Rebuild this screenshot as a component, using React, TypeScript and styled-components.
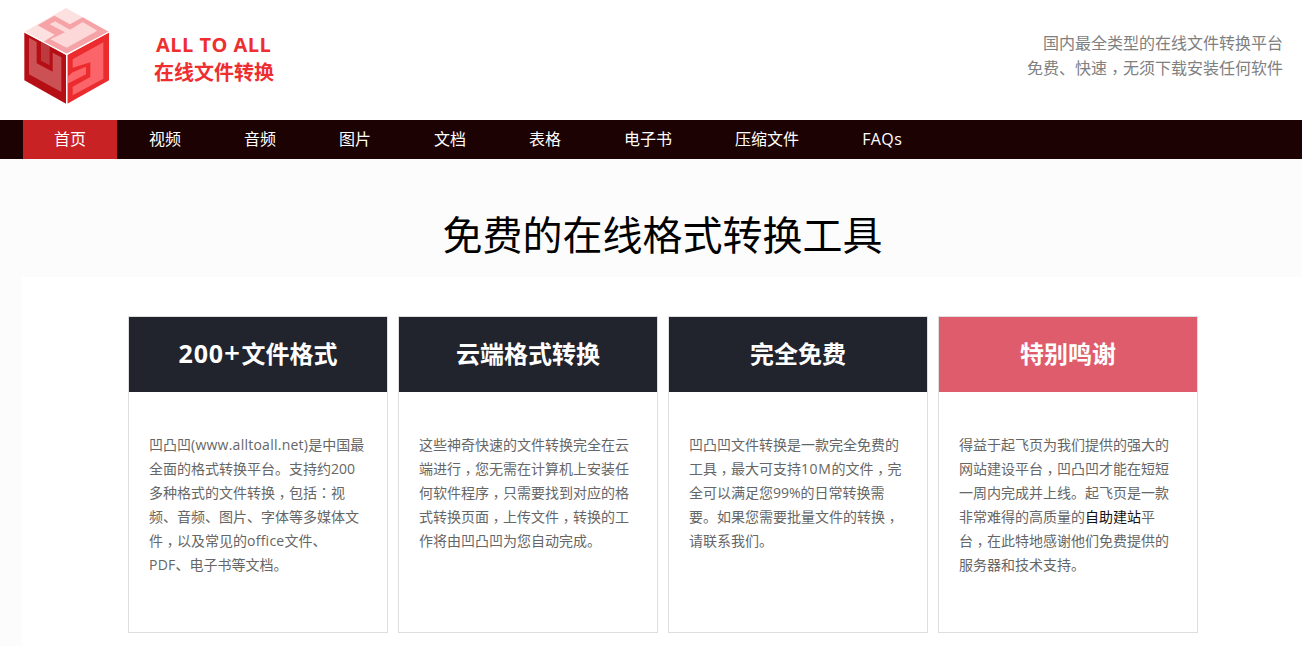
import React from 'react';
import styled, { createGlobalStyle } from 'styled-components';

const GlobalStyle = createGlobalStyle`
  body {
    margin: 0;
    background: #fcfcfc;
    font-family: 'Open Sans', 'Noto Sans CJK SC', sans-serif;
    text-spacing-trim: space-all;
    overflow: hidden;
  }
`;

const Header = styled.header`
  display: flex;
  align-items: center;
  height: 120px;
  padding: 0 19px 0 10px;
  background: #fff;
`;

const Logo = styled.svg`
  display: block;
  width: 120px;
  height: 120px;
`;

const Brand = styled.div`
  margin-left: 24px;
  padding-bottom: 2px;
  color: #ee2f2f;
  font-size: 20px;
  line-height: 28px;
  font-weight: 700;
`;

const BrandLatin = styled.div`
  padding-left: 2px;
  letter-spacing: 0.45px;
`;

const Slogan = styled.p`
  margin: 0 0 8px auto;
  color: #808080;
  font-size: 16px;
  line-height: 25px;
  text-align: right;
`;

const Nav = styled.nav`
  display: flex;
  gap: 1px;
  height: 39px;
  padding-left: 23px;
  background: #1c0202;
`;

const NavItem = styled.a<{ $active?: boolean }>`
  padding: 0 31px;
  background: ${(p) => (p.$active ? '#c92224' : 'transparent')};
  color: #fff;
  font-size: 16px;
  line-height: 38px;
  white-space: nowrap;
`;

const Title = styled.h1`
  margin: 0;
  padding: 41px 0 0 23px;
  height: 77px;
  color: #000;
  font-size: 40px;
  line-height: 70px;
  font-weight: 400;
  text-align: center;
`;

const Content = styled.main`
  display: flex;
  gap: 10px;
  height: 330px;
  margin-left: 22px;
  padding: 39px 0 0 106px;
  background: #fff;
`;

const Card = styled.section`
  box-sizing: border-box;
  width: 260px;
  height: 317px;
  border: 1px solid #dedede;
`;

const CardTitle = styled.h2<{ $accent?: boolean }>`
  margin: 0;
  height: 75px;
  background: ${(p) => (p.$accent ? '#df5c6c' : '#21242d')};
  color: #fff;
  font-size: 24px;
  line-height: 74px;
  font-weight: 700;
  text-align: center;
`;

const CardText = styled.p`
  margin: 0;
  padding: 41px 0 0 20px;
  color: #666;
  font-size: 14px;
  line-height: 24px;
`;

const Line = styled.span`
  display: block;
  height: 24px;
  white-space: nowrap;
`;

const Centered = styled.span<{ $low?: boolean }>`
  font-family: 'Noto Sans CJK TC', sans-serif;
  line-height: 0;
  vertical-align: ${(p) => (p.$low ? '-0.25em' : 'baseline')};
`;

const Latin = styled.span<{ $spacing: number }>`
  letter-spacing: ${(p) => p.$spacing}px;
`;

const Figure = styled.span`
  font-size: 25px;
  line-height: 0;
  letter-spacing: 0.9px;
`;

const Plus = styled.span`
  font-size: 28px;
  line-height: 0;
  font-weight: 600;
  letter-spacing: 1.4px;
`;

const Link = styled.a`
  color: #111;
`;

const navItems = ['首页', '视频', '音频', '图片', '文档', '表格', '电子书', '压缩文件', 'FAQs'];

const LINK_TEXT = '自助建站';

const cards = [
  {
    title: (
      <>
        <Figure>200</Figure>
        <Plus>+</Plus>
        文件格式
      </>
    ),
    lines: [
      '凹凸凹(www.alltoall.net)是中国最',
      '全面的格式转换平台。支持约200',
      '多种格式的文件转换，包括：视',
      '频、音频、图片、字体等多媒体文',
      '件，以及常见的office文件、',
      'PDF、电子书等文档。',
    ],
  },
  {
    title: '云端格式转换',
    lines: [
      '这些神奇快速的文件转换完全在云',
      '端进行，您无需在计算机上安装任',
      '何软件程序，只需要找到对应的格',
      '式转换页面，上传文件，转换的工',
      '作将由凹凸凹为您自动完成。',
    ],
  },
  {
    title: '完全免费',
    lines: [
      '凹凸凹文件转换是一款完全免费的',
      '工具，最大可支持10M的文件，完',
      '全可以满足您99%的日常转换需',
      '要。如果您需要批量文件的转换，',
      '请联系我们。',
    ],
  },
  {
    title: '特别鸣谢',
    accent: true,
    lines: [
      '得益于起飞页为我们提供的强大的',
      '网站建设平台，凹凸凹才能在短短',
      '一周内完成并上线。起飞页是一款',
      '非常难得的高质量的自助建站平',
      '台，在此特地感谢他们免费提供的',
      '服务器和技术支持。',
    ],
  },
];

const renderText = (text: string, spacing = 0.25) =>
  text.split(/([，：]|自助建站|[A-Za-z().]{2,}|10M)/).map((part, i) => {
    if (part === LINK_TEXT) return <Link key={i}>{part}</Link>;
    if (part === '，' || part === '：') {
      return (
        <Centered key={i} $low={part === '，'}>
          {part}
        </Centered>
      );
    }
    if (i % 2 === 1) {
      return (
        <Latin key={i} $spacing={part === '10M' ? 0.6 : spacing}>
          {part}
        </Latin>
      );
    }
    return part;
  });

const CubeLogo = () => (
  <Logo viewBox="0 0 360 360">
    <polygon points="168,24 297,96 170,163 43,96" fill="#fde0e0" />
    <polygon
      points="218,52 297,96 170,163 98,127 134,104 83,76 133,47 180,73"
      fill="#f5a3a7"
    />
    <polygon
      points="218,66 262,92 170,143 121,118 165,97 119,73 135,64 180,89"
      fill="#fdd8d8"
    />
    <polygon points="43,97 168,165 168,311 43,241" fill="#b50f15" />
    <polygon
      points="57,113 80,126 80,190 128,215 128,158 154,172 154,276 57,223"
      fill="#cc5155"
    />
    <polygon points="93,124 119,138 119,196 93,182" fill="#bd3a3f" />
    <polygon points="172,165 297,97 297,241 172,311" fill="#ec2b2f" />
    <polygon
      points="188,178 280,127 280,236 188,286 188,260 241,231 241,187 188,203"
      fill="#fb6468"
    />
    <polygon points="173,230 188,217 228,200 228,223 173,251" fill="#fb6468" />
    <path d="M43 96L170 163L297 96M170 163V312" fill="none" stroke="#fff" strokeWidth="4" />
  </Logo>
);

export default function App() {
  return (
    <>
      <GlobalStyle />
      <Header>
        <CubeLogo />
        <Brand>
          <BrandLatin>ALL TO ALL</BrandLatin>
          在线文件转换
        </Brand>
        <Slogan>
          国内最全类型的在线文件转换平台
          <br />
          {renderText('免费、快速，无须下载安装任何软件')}
        </Slogan>
      </Header>
      <Nav>
        {navItems.map((label, i) => (
          <NavItem key={label} $active={i === 0}>
            {renderText(label, 0.4)}
          </NavItem>
        ))}
      </Nav>
      <Title>免费的在线格式转换工具</Title>
      <Content>
        {cards.map((card) => (
          <Card key={card.lines[0]}>
            <CardTitle $accent={card.accent}>{card.title}</CardTitle>
            <CardText>
              {card.lines.map((line) => (
                <Line key={line}>{renderText(line)}</Line>
              ))}
            </CardText>
          </Card>
        ))}
      </Content>
    </>
  );
}
